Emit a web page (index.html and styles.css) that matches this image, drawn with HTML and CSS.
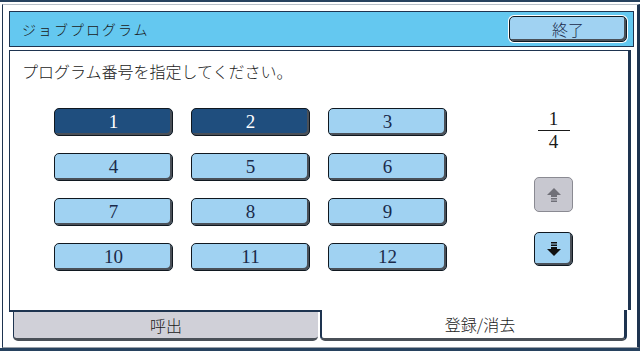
FILE: index.html
```html
<!DOCTYPE html>
<html lang="ja">
<head>
  <meta charset="UTF-8">
  <title>ジョブプログラム</title>
  <link rel="stylesheet" href="styles.css">
</head>
<body>
  <div class="screen">
    <div class="frame">
      <header class="titlebar">
        <span class="title">ジョブプログラム</span>
        <button class="btn close-btn">終了</button>
      </header>

      <main class="panel">
        <p class="prompt">プログラム番号を指定してください。</p>
        <div class="panel-body">
          <div class="program-grid">
            <button class="btn num selected">1</button>
            <button class="btn num selected">2</button>
            <button class="btn num">3</button>
            <button class="btn num">4</button>
            <button class="btn num">5</button>
            <button class="btn num">6</button>
            <button class="btn num">7</button>
            <button class="btn num">8</button>
            <button class="btn num">9</button>
            <button class="btn num">10</button>
            <button class="btn num">11</button>
            <button class="btn num">12</button>
          </div>

          <div class="pager">
            <div class="page-num">1</div>
            <div class="page-bar"></div>
            <div class="page-num">4</div>

            <button class="btn arrow-btn up" disabled>
              <svg width="16" height="16" viewBox="0 0 16 16">
                <polygon points="1,8 15,8 8,1" />
                <rect x="5" y="8" width="6" height="2" />
                <rect x="5" y="11" width="6" height="1.5" />
                <rect x="5" y="13.5" width="6" height="1.5" />
              </svg>
            </button>
            <button class="btn arrow-btn down">
              <svg width="16" height="16" viewBox="0 0 16 16">
                <rect x="5" y="1" width="6" height="1.5" />
                <rect x="5" y="3.5" width="6" height="1.5" />
                <rect x="5" y="6" width="6" height="2" />
                <polygon points="1,8 15,8 8,15" />
              </svg>
            </button>
          </div>
        </div>
      </main>

      <nav class="tabs">
        <div class="tab">呼出</div>
        <div class="tab active">登録/消去</div>
      </nav>
    </div>
  </div>
</body>
</html>
```

FILE: styles.css
```css
body {
  margin: 0;
  background: #fff;
  font-family: "Noto Sans CJK JP", sans-serif;
  font-weight: 300;
  color: #1a1a1a;
}

.screen {
  width: 640px;
  height: 351px;
  box-sizing: border-box;
  border-top: 2px solid #27425f;
  border-bottom: 3px solid #27425f;
}

.frame {
  margin: 2px 0 0 2px;
  width: 638px;
  height: 344px;
  box-sizing: border-box;
  border-left: 1px solid #1e3450;
  border-right: 3px solid #1e3450;
  border-top: 1px solid #b8c0c8;
  border-bottom: 1px solid #9aa0a8;
  padding: 6px 3px 5px 6px;
}

/* barre de titre */
.titlebar {
  height: 36px;
  box-sizing: border-box;
  display: flex;
  justify-content: space-between;
  align-items: center;
  padding: 0 6px 0 12px;
  background: #64c8f0;
  border: 1px solid #1e3450;
}

.title {
  font-size: 14px;
  letter-spacing: 2px;
  color: #1a1a1a;
}

.btn {
  font-family: inherit;
  font-weight: inherit;
  padding: 0;
  background: #a0d2f2;
  color: #1a2a4a;
  border: 1px solid #101820;
  border-radius: 5px;
  box-shadow: inset -2px -2px 0 #4a5058, 0 0 0 1px #fff;
  cursor: pointer;
}

.close-btn {
  width: 118px;
  height: 26px;
  font-size: 16px;
}

/* panneau principal */
.panel {
  margin: 3px 3px 0 0;
  height: 260px;
  box-sizing: border-box;
  background: #fff;
  border-left: 1px solid #1e3450;
  border-top: 1px solid #1e3450;
  border-right: 3px solid #1e3450;
}

.prompt {
  margin: 0;
  padding: 9px 0 0 12px;
  font-size: 16px;
  line-height: 22px;
}

.panel-body {
  display: flex;
  margin-top: 26px;
  padding-left: 44px;
}

.program-grid {
  display: grid;
  grid-template-columns: repeat(3, 119px);
  grid-auto-rows: 28px;
  column-gap: 18px;
  row-gap: 17px;
}

.num {
  font-family: "Liberation Serif", serif;
  font-size: 19px;
  font-weight: normal;
}

.num.selected {
  background: #1f4e7e;
  color: #fff;
}

.pager {
  margin-left: 87px;
  width: 39px;
  display: flex;
  flex-direction: column;
  align-items: center;
}

.page-num {
  font-family: "Liberation Serif", serif;
  font-size: 19px;
  font-weight: normal;
  line-height: 22px;
}

.page-bar {
  width: 32px;
  height: 1px;
  background: #1a1a1a;
}

.arrow-btn {
  width: 39px;
  height: 35px;
  display: flex;
  align-items: center;
  justify-content: center;
}

.arrow-btn.up {
  margin-top: 24px;
  background: #c8c8d0;
  border-color: #8a8a92;
  box-shadow: none;
  fill: #707078;
  cursor: default;
}

.arrow-btn.down {
  margin-top: 20px;
  height: 34px;
  fill: #111;
}

/* onglets */
.tabs {
  display: flex;
  height: 31px;
  padding-left: 4px;
  background: linear-gradient(#1e3450, #1e3450) 0 0 / 311px 2px no-repeat;
}

.tab {
  height: 31px;
  box-sizing: border-box;
  display: flex;
  align-items: center;
  justify-content: center;
  font-size: 16px;
  border-bottom: 3px solid #4a5058;
  border-radius: 0 0 5px 5px;
}

.tab:first-child {
  width: 305px;
  background: #d0d0d8;
  border-top: 2px solid #1e3450;
  border-left: 1px solid #1e3450;
}

.tab.active {
  margin-left: 2px;
  width: 307px;
  padding-left: 14px;
  background: #fff;
  border-left: 2px solid #1e3450;
  border-right: 3px solid #1e3450;
}
```
